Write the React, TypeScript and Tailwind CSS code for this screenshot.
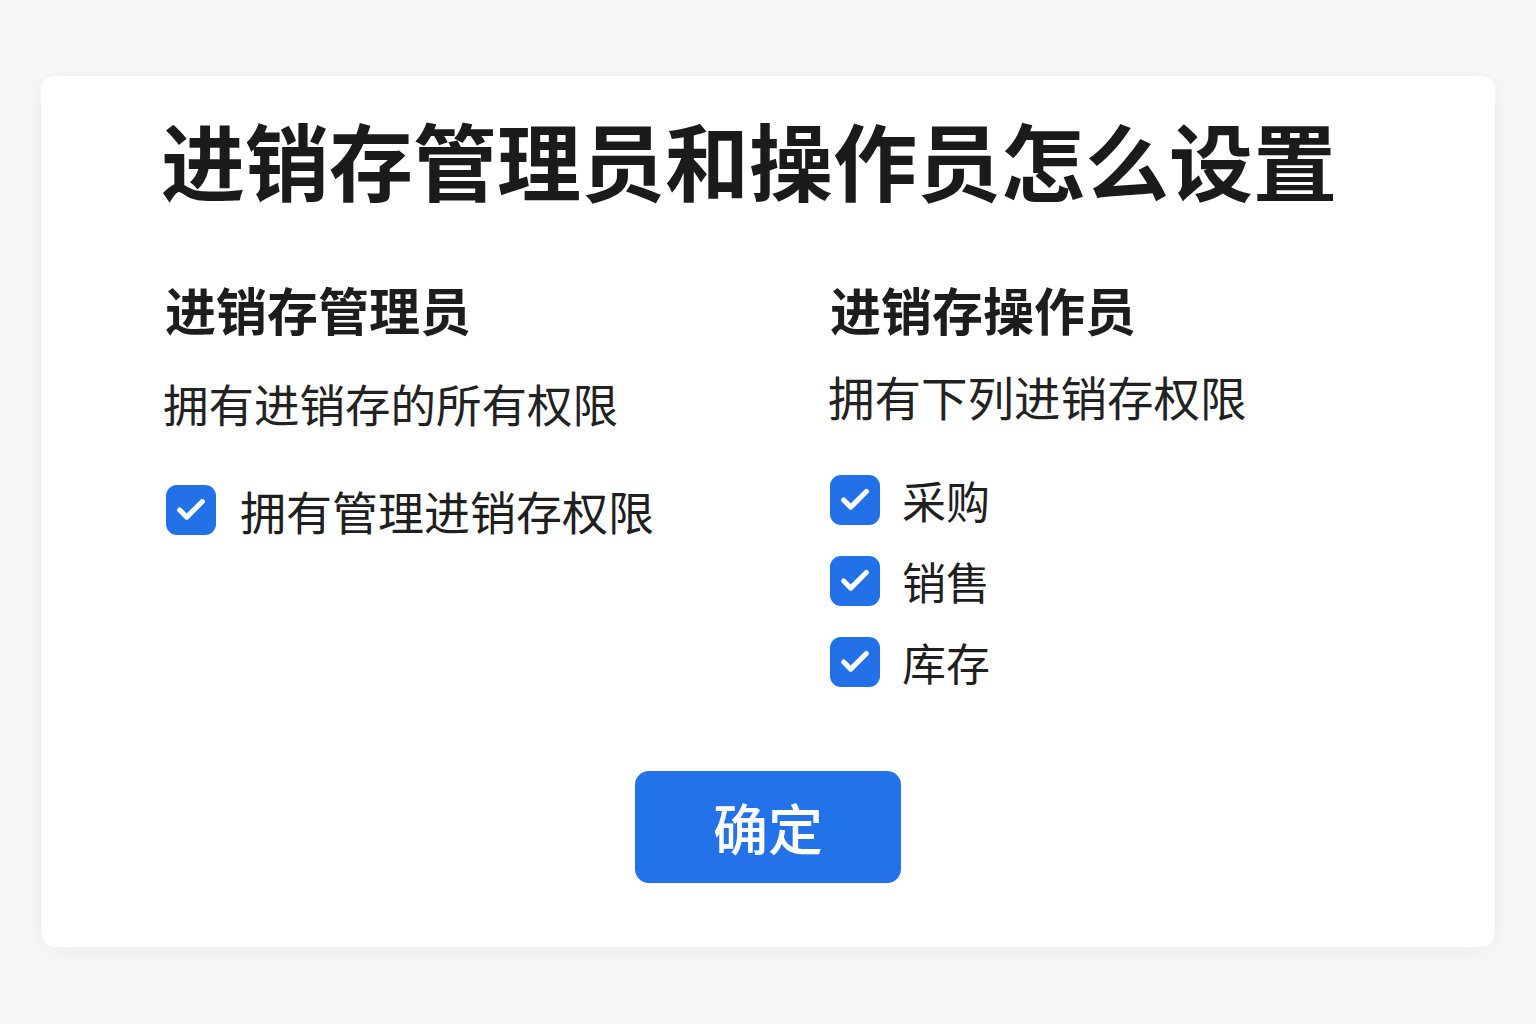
import { Check } from "lucide-react";

const font = { fontFamily: '"Noto Sans CJK SC", "Noto Sans", sans-serif' };

function CheckItem({ label, size = "text-[45px]", gap = "gap-[26px]" }: { label: string; size?: string; gap?: string }) {
  return (
    <div className={`flex items-center ${gap}`}>
      <span className="flex h-[50px] w-[50px] items-center justify-center rounded-[11px] bg-[#2271e8]">
        <Check className="h-[34px] w-[34px] text-white" strokeWidth={3.6} />
      </span>
      <span className={`${size} leading-none text-[#1f1f1f]`}>{label}</span>
    </div>
  );
}

export default function App() {
  return (
    <div className="min-h-screen bg-[#f7f7f7] pt-[76px] pl-[41px]" style={font}>
      <div className="w-[1454px] h-[871px] rounded-[14px] bg-white shadow-[0_4px_24px_rgba(0,0,0,0.05)] pt-[41px] pl-[122px] flex flex-col">
        <h1 className="text-[84px] font-bold leading-none text-[#1b1b1b] -ml-[2px]">
          进销存管理员和操作员怎么设置
        </h1>

        <div className="grid grid-cols-[665px_1fr] mt-[83px]">
          <div className="flex flex-col pl-[2px]">
            <h2 className="text-[51px] font-bold leading-none text-[#1d1d1d]">进销存管理员</h2>
            <p className="mt-[46px] -ml-[2px] text-[45.5px] leading-none text-[#222]">拥有进销存的所有权限</p>
            <div className="mt-[58px] ml-[1px]">
              <CheckItem label="拥有管理进销存权限" size="text-[46px]" gap="gap-[24px]" />
            </div>
          </div>
          <div className="flex flex-col pl-[2px]">
            <h2 className="text-[51px] font-bold leading-none text-[#1d1d1d]">进销存操作员</h2>
            <p className="mt-[38px] -ml-[2px] text-[46.5px] leading-none text-[#222]">拥有下列进销存权限</p>
            <div className="mt-[55px] flex flex-col gap-[31px]">
              <CheckItem label="采购" size="text-[44px]" gap="gap-[22px]" />
              <CheckItem label="销售" size="text-[44px]" gap="gap-[22px]" />
              <CheckItem label="库存" size="text-[44px]" gap="gap-[22px]" />
            </div>
          </div>
        </div>

        <div className="mt-[84px] flex justify-center pr-[122px]">
          <button className="h-[112px] w-[266px] rounded-[14px] bg-[#2372e9] text-[55px] font-medium leading-none text-white">
            确定
          </button>
        </div>
      </div>
    </div>
  );
}
